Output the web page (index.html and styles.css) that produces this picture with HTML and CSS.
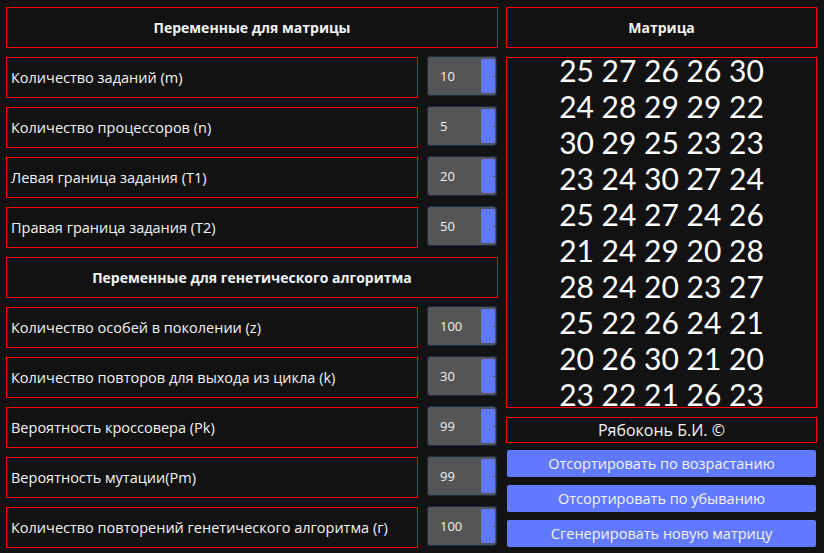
FILE: index.html
```html
<!DOCTYPE html>
<html lang="ru">
<head>
<meta charset="utf-8">
<title>Генетический алгоритм</title>
<link rel="stylesheet" href="styles.css">
</head>
<body>
<div class="app">
  <div class="col left">
    <div class="box header">Переменные для матрицы</div>
    <div class="row"><div class="box label">Количество заданий (m)</div><div class="spin"><span class="val">10</span><span class="arrows"></span></div></div>
    <div class="row"><div class="box label">Количество процессоров (n)</div><div class="spin"><span class="val">5</span><span class="arrows"></span></div></div>
    <div class="row"><div class="box label">Левая граница задания (T1)</div><div class="spin"><span class="val">20</span><span class="arrows"></span></div></div>
    <div class="row"><div class="box label">Правая граница задания (T2)</div><div class="spin"><span class="val">50</span><span class="arrows"></span></div></div>
    <div class="box header">Переменные для генетического алгоритма</div>
    <div class="row"><div class="box label">Количество особей в поколении (z)</div><div class="spin"><span class="val">100</span><span class="arrows"></span></div></div>
    <div class="row"><div class="box label">Количество повторов для выхода из цикла (k)</div><div class="spin"><span class="val">30</span><span class="arrows"></span></div></div>
    <div class="row"><div class="box label">Вероятность кроссовера (Pk)</div><div class="spin"><span class="val">99</span><span class="arrows"></span></div></div>
    <div class="row"><div class="box label">Вероятность мутации(Pm)</div><div class="spin"><span class="val">99</span><span class="arrows"></span></div></div>
    <div class="row"><div class="box label">Количество повторений генетического алгоритма (г)</div><div class="spin"><span class="val">100</span><span class="arrows"></span></div></div>
  </div>
  <div class="col right">
    <div class="box header">Матрица</div>
    <div class="box matrix">
      <div class="matrix-inner">
        <div>25 27 26 26 30</div>
        <div>24 28 29 29 22</div>
        <div>30 29 25 23 23</div>
        <div>23 24 30 27 24</div>
        <div>25 24 27 24 26</div>
        <div>21 24 29 20 28</div>
        <div>28 24 20 23 27</div>
        <div>25 22 26 24 21</div>
        <div>20 26 30 21 20</div>
        <div>23 22 21 26 23</div>
      </div>
    </div>
    <div class="box author">Рябоконь Б.И. ©</div>
    <div class="buttons">
      <button class="btn">Отсортировать по возрастанию</button>
      <button class="btn">Отсортировать по убыванию</button>
      <button class="btn">Сгенерировать новую матрицу</button>
    </div>
  </div>
</div>
</body>
</html>
```
FILE: styles.css
```css
html, body {
  margin: 0;
  padding: 0;
  background: #121212;
  color: #f2f2f2;
  font-family: "Open Sans", "Noto Sans", sans-serif;
}
.app {
  width: 824px;
  height: 553px;
  box-sizing: border-box;
  padding: 7px 7px 0 6px;
  display: grid;
  grid-template-columns: 492px 311px;
  column-gap: 8px;
  overflow: hidden;
}
.col {
  display: flex;
  flex-direction: column;
  gap: 9px;
}
.box {
  border: 1px solid #ff0000;
  box-sizing: border-box;
}
.header {
  height: 41px;
  display: flex;
  align-items: center;
  justify-content: center;
  font-weight: 700;
  font-size: 14px;
}
.row {
  display: flex;
  gap: 9px;
  height: 41px;
}
.label {
  width: 412px;
  display: flex;
  align-items: center;
  padding-left: 4px;
  font-size: 14.5px;
}
.spin {
  width: 70px;
  height: 40px;
  margin-top: -1px;
  box-sizing: border-box;
  border: 1px solid #1c2a47;
  border-radius: 3px;
  background: #555555;
  display: flex;
  align-items: center;
  padding: 2px 1px 2px 0;
}
.val {
  flex: 1;
  padding-left: 12px;
  font-size: 13px;
}
.arrows {
  position: relative;
  width: 14px;
  height: 100%;
  background: #6179ff;
  border-radius: 2px;
}
.arrows::after {
  content: "";
  position: absolute;
  right: 0;
  top: 50%;
  width: 2px;
  height: 1px;
  background: #555;
}
.matrix {
  height: 351px;
}
.matrix-inner {
  margin-top: -6px;
  text-align: center;
  font-family: Lato, "Open Sans", sans-serif;
  font-size: 30px;
  line-height: 36px;
  color: #ffffff;
}
.author {
  height: 26px;
  display: flex;
  align-items: center;
  justify-content: center;
  font-size: 16px;
}
.buttons {
  display: flex;
  flex-direction: column;
  gap: 8px;
  margin-top: -2px;
}
.btn {
  height: 27px;
  border: none;
  border-radius: 2px;
  background: #6179ff;
  color: #f4f4f4;
  font-family: inherit;
  font-size: 14.5px;
  padding: 0;
  margin: 0 1px;
}
```
